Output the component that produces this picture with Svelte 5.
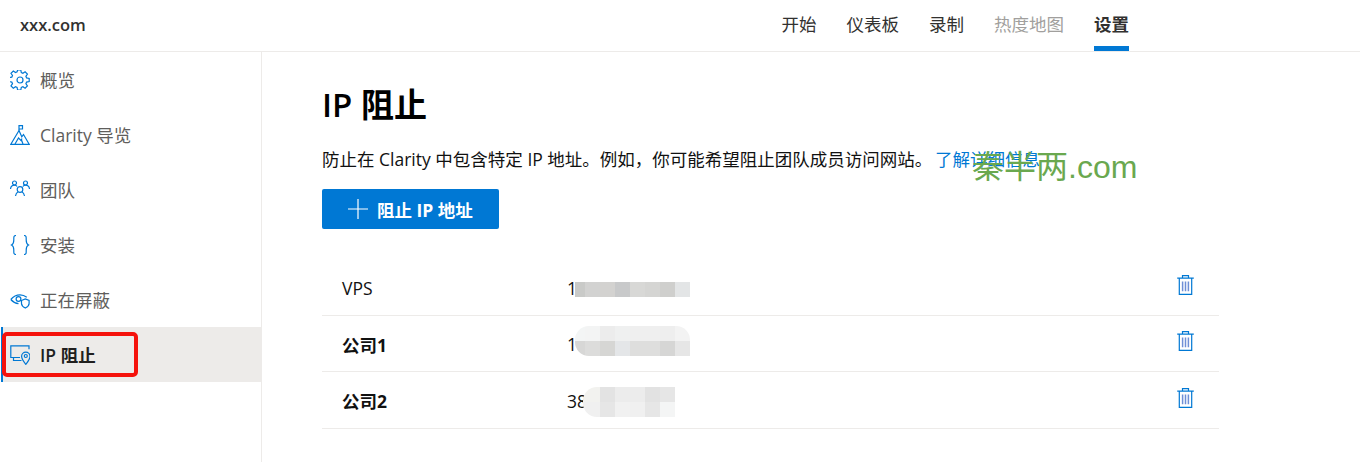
<script>
  const tabs = [
    { label: "开始" },
    { label: "仪表板" },
    { label: "录制" },
    { label: "热度地图", disabled: true },
    { label: "设置", active: true }
  ];

  const nav = [
    { label: "概览", icon: "gear" },
    { label: "Clarity 导览", icon: "tour" },
    { label: "团队", icon: "team" },
    { label: "安装", icon: "code" },
    { label: "正在屏蔽", icon: "mask" },
    { label: "IP 阻止", icon: "ip", active: true }
  ];

  // the masked part of each address, as mosaic cells
  const rows = [
    {
      name: "VPS", ip: "1", bold: false, left: 8, top: 6, radius: "0",
      cols: [10, 15, 15, 15, 15, 15, 15, 15],
      blur: ["#c9cac8", "#d2d2d1", "#d3d2d0", "#c8c9ca", "#d8d8d6", "#d5d5d3", "#cfcfcd", "#e3e5e6"]
    },
    {
      name: "公司1", ip: "1", bold: true, left: 8, top: -6, radius: "14px 14px 0 14px",
      cols: [10, 15, 15, 15, 15, 15, 15, 15],
      blur: [
        "#f3f5f5", "#f3f4f4", "#ececec", "#eff0f0", "#efefef", "#efefef", "#eeeeee", "#f3f3f3",
        "#d7d7d6", "#dcdcdb", "#d6d6d4", "#e4e6e8", "#dededd", "#dededd", "#d6d6d5", "#e6e6e6"
      ]
    },
    {
      name: "公司2", ip: "38", bold: true, left: 16, top: -2, radius: "14px 0 0 14px",
      cols: [17, 15, 15, 15, 15, 15],
      blur: [
        "#f2f2ef", "#e3e3e3", "#ececec", "#ececec", "#e2e2e2", "#e6e6e6",
        "#f0f0f0", "#e6e6e6", "#f1f1f1", "#f0f0f0", "#e6e6e6", "#f4f5f5"
      ]
    }
  ];
</script>

<div class="page">
  <header>
    <span class="site">xxx.com</span>
    <nav class="tabs">
      {#each tabs as t}
        <span class="tab" class:disabled={t.disabled} class:active={t.active}>{t.label}</span>
      {/each}
    </nav>
  </header>

  <div class="body">
    <aside>
      {#each nav as n}
        <div class="item" class:active={n.active}>
          <svg class="ico" viewBox="0 0 20 20" fill="none" stroke="#0078d4" stroke-width="1.2">
            {#if n.icon === "gear"}
              <circle cx="10" cy="10" r="3" />
              <path d="M8.4 .8h3.200l.5 2.600 1.600.7 2.200-1.500 2.300 2.300-1.500 2.200.7 1.600 2.600.5v3.200l-2.600.5-.7 1.600 1.500 2.200-2.300 2.300-2.200-1.500-1.600.7-.5 2.600H8.400l-.5-2.600-1.600-.7-2.200 1.500-2.300-2.300 1.500-2.200-.7-1.600-2.600-.5V8.400l2.600-.5.7-1.600-1.500-2.200 2.300-2.300 2.200 1.500 1.600-.7z" transform="translate(-.8 -.8)" />
            {:else if n.icon === "tour"}
              <path d="M.7 19.400h18.600L13.500 9.500l-1.700 2.300L9 5.500z" />
              <path d="M9 5.500V.6h3.500v3.400H9M5 19l3.500-6 2.500 2.500 1-2M13 19l-1.500-4" />
            {:else if n.icon === "team"}
              <circle cx="10" cy="9.500" r="2.800" />
              <path d="M5.500 16c.3-2 1.200-3.500 2.500-4.300M14.500 16c-.3-2-1.200-3.500-2.500-4.300" />
              <circle cx="4.500" cy="3" r="2" />
              <circle cx="15.500" cy="3" r="2" />
              <path d="M.5 9c.3-2.200 1.500-3.800 4-3.800 1 0 2 .4 2.600 1.300M19.500 9c-.3-2.200-1.500-3.800-4-3.800-1 0-2 .4-2.600 1.300" />
            {:else if n.icon === "code"}
              <path d="M6 .5C3.500.5 3.800 2 3.800 5c0 2.800-.3 4-2.300 5 2 1 2.300 2.200 2.300 5 0 3-.3 4.500 2.200 4.500M14 .5c2.500 0 2.200 1.500 2.200 4.500 0 2.800.3 4 2.300 5-2 1-2.300 2.200-2.300 5 0 3 .3 4.500-2.200 4.500" />
            {:else if n.icon === "mask"}
              <path d="M.8 9.500C3.500 6.200 6.500 4.800 10 4.800c2.500 0 4.700.8 6.800 2.500M.8 9.500c2.200 2.500 4.700 3.800 7.700 4.200" />
              <circle cx="8.500" cy="9" r="2.400" />
              <path d="M11.500 10.500l3.800-1.500 3.800 1.500v3c0 2-1.500 3.300-3.800 4.500-2.300-1.200-3.800-2.500-3.800-4.500z" />
            {:else if n.icon === "ip"}
              <path d="M10 12.500H.8V.8h18.200v3.500M3.500 12.500v3h8" />
              <path d="M15.800 19.300c-2.700-3.300-4.200-5.300-4.200-8a4.200 4.200 0 0 1 8.400 0c0 2.700-1.500 4.700-4.200 8z" />
              <circle cx="15.800" cy="11" r="1.500" />
            {/if}
          </svg>
          <span>{n.label}</span>
        </div>
      {/each}
    </aside>

    <main>
      <h1>IP 阻止</h1>
      <p>防止在 Clarity 中包含特定 IP 地址。例如，你可能希望阻止团队成员访问网站。 <span class="link">了解详细信息</span></p>
      <button>
        <svg viewBox="0 0 20 20" width="20" height="20" stroke="#fff" stroke-width="1.200"><path d="M10 0v20M0 10h20" /></svg>
        阻止 IP 地址
      </button>

      <div class="list">
        {#each rows as r}
          <div class="row">
            <span class="name" class:bold={r.bold}>{r.name}</span>
            <span class="ip">
              {r.ip}
              <span
                class="blur"
                style="left: {r.left}px; top: {r.top}px; border-radius: {r.radius}; grid-template-columns: {r.cols.map((c) => c + 'px').join(' ')}"
              >
                {#each r.blur as c}
                  <i style="background: {c}"></i>
                {/each}
              </span>
            </span>
            <svg class="trash" viewBox="0 0 17 20" fill="none" stroke="#0078d4" stroke-width="1.200">
              <path d="M.2 3.200h16.600M5.500 3V.7h6V3M2.300 3.200V19.300h12.400V3.200" />
              <path d="M5.600 6.500v9.800M8.500 6.500v9.800M11.400 6.500v9.800" stroke="#6f8fd6" stroke-width="1.500" />
            </svg>
          </div>
        {/each}
      </div>
    </main>
  </div>

  <div class="mark">秦半两.com</div>
  <div class="callout"></div>
</div>

<style>
  :global(body) {
    margin: 0;
    background: #fff;
  }
  .page {
    position: relative;
    height: 462px;
    overflow: hidden;
    font-family: "Open Sans", "Noto Sans CJK SC", sans-serif;
    color: #323130;
  }
  header {
    display: flex;
    align-items: center;
    justify-content: space-between;
    height: 51px;
    padding: 0 231px 0 20px;
    border-bottom: 1px solid #edebe9;
  }
  .site {
    margin-bottom: 3px;
    font-size: 16.5px;
    font-weight: 600;
  }
  .tabs {
    display: flex;
    gap: 30px;
    align-self: stretch;
  }
  .tab {
    display: flex;
    align-items: center;
    box-sizing: border-box;
    height: 51px;
    font-size: 17.5px;
    border-bottom: 5px solid transparent;
  }
  .tab.disabled {
    color: #a19f9d;
  }
  .tab.active {
    font-weight: 700;
    border-bottom-color: #0078d4;
  }
  .body {
    display: flex;
    height: 410px;
  }
  aside {
    width: 261px;
    flex: none;
    border-right: 1px solid #edebe9;
  }
  .item {
    display: flex;
    align-items: center;
    gap: 10px;
    height: 55px;
    padding-left: 10px;
    font-size: 17.5px;
    color: #605e5c;
  }
  .item.active {
    margin-left: 1px;
    padding-left: 7px;
    border-left: 2px solid #0078d4;
    background: #edebe9;
    color: #201f1e;
    font-weight: 600;
  }
  .ico {
    width: 20px;
    height: 20px;
    flex: none;
  }
  main {
    flex: 1;
    padding: 31px 141px 0 60px;
  }
  h1 {
    margin: 0;
    font-size: 33px;
    line-height: 44px;
    font-weight: 600;
    color: #000;
  }
  p {
    margin: 20px 0 0;
    font-size: 17.5px;
    line-height: 24px;
    color: #111;
  }
  .link {
    margin-left: -2px;
    color: #0078d4;
  }
  button {
    display: flex;
    align-items: center;
    gap: 9px;
    height: 40px;
    margin-top: 18px;
    padding: 0 26px;
    border: 0;
    border-radius: 2px;
    background: #0078d4;
    color: #fff;
    font: 700 17.5px "Open Sans", "Noto Sans CJK SC", sans-serif;
  }
  .list {
    margin-top: 30px;
  }
  .row {
    display: flex;
    align-items: center;
    box-sizing: border-box;
    height: 56.500px;
    padding: 0 25px 0 20px;
    border-bottom: 1px solid #edebe9;
    font-size: 17.5px;
    color: #111;
  }
  .name {
    width: 225px;
    flex: none;
    margin-top: 2px;
  }
  .name.bold {
    font-weight: 700;
  }
  .ip {
    position: relative;
    flex: 1;
    margin-top: 2px;
  }
  .blur {
    position: absolute;
    display: grid;
    grid-auto-rows: 15px;
    overflow: hidden;
  }
  .blur i {
    display: block;
  }
  .trash {
    width: 17px;
    height: 20px;
    flex: none;
    margin-top: -4px;
  }
  .mark {
    position: absolute;
    left: 972px;
    top: 145px;
    font: 32px "Liberation Sans", "Noto Sans CJK SC", sans-serif;
    color: #6aa84f;
    line-height: 44px;
  }
  .callout {
    position: absolute;
    left: 2px;
    top: 332px;
    width: 128px;
    height: 37px;
    border: 4px solid #f5120c;
    border-radius: 5px;
  }
</style>
